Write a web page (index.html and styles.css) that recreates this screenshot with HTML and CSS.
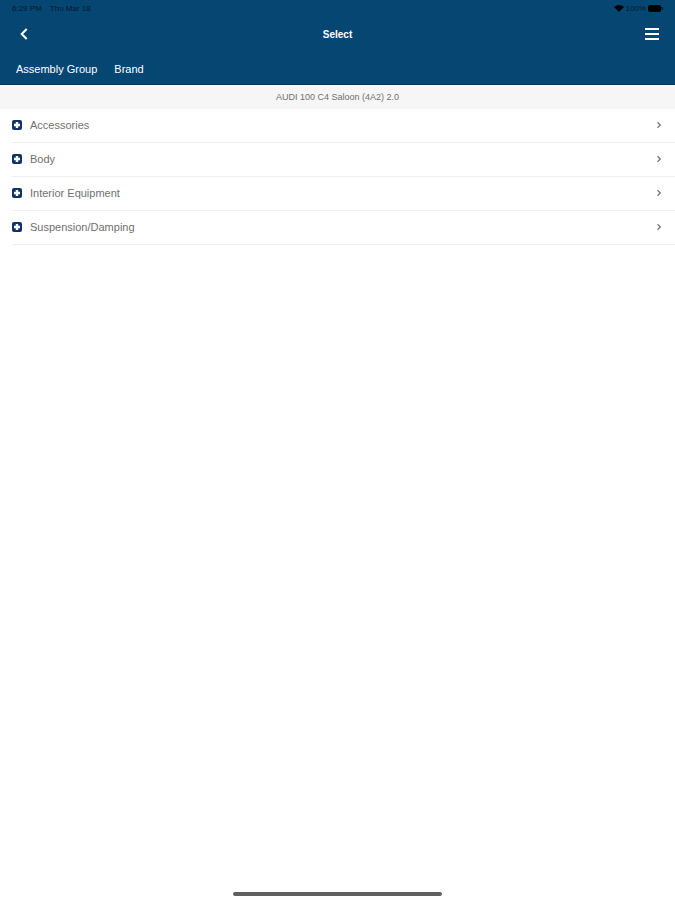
FILE: index.html
```html
<!DOCTYPE html>
<html lang="en">
<head>
<meta charset="utf-8">
<meta name="viewport" content="width=device-width, initial-scale=1">
<title>Select</title>
<link rel="stylesheet" href="styles.css">
</head>
<body>
<svg class="sprite" aria-hidden="true">
  <symbol id="plus" viewBox="0 0 10 10">
    <rect width="10" height="10" rx="2" fill="#12326b"/>
    <path d="M5 2v6M2 5h6" stroke="#fff" stroke-width="2.4"/>
  </symbol>
  <symbol id="chevron" viewBox="0 0 6 8">
    <path d="M1.5 1.2 4.3 4 1.5 6.8" fill="none" stroke="#777" stroke-width="1.3"/>
  </symbol>
</svg>
<header class="header">
  <div class="status">
    <span>6:29 PM</span>
    <span>Thu Mar 18</span>
    <span class="status-right">
      <svg width="10" height="7" viewBox="0 0 10 7" aria-hidden="true"><path d="M0 2Q5-2 10 2L5 7Z"/></svg>
      <span>100%</span>
      <svg width="15" height="7" viewBox="0 0 15 7" aria-hidden="true"><rect width="13" height="7" rx="2"/><rect x="13.5" y="2" width="1" height="3"/></svg>
    </span>
  </div>
  <div class="bar">
    <button class="icon-button" aria-label="Back">
      <svg width="8" height="12" viewBox="0 0 8 12"><path d="M6.7 1 1.7 6l5 5" fill="none" stroke="#fff" stroke-width="2"/></svg>
    </button>
    <h1 class="title">Select</h1>
    <button class="icon-button icon-button-end" aria-label="Menu">
      <svg width="14" height="12" viewBox="0 0 14 12"><path d="M0 1h14M0 6h14M0 11h14" stroke="#fff" stroke-width="2"/></svg>
    </button>
  </div>
  <nav class="tabs">
    <a href="#assembly">Assembly Group</a>
    <a href="#brand">Brand</a>
  </nav>
</header>
<main class="main">
  <h2 class="vehicle">AUDI 100 C4 Saloon (4A2) 2.0</h2>
  <ul class="list">
    <li><a class="row" href="#accessories"><svg class="plus"><use href="#plus"/></svg><span class="label">Accessories</span><svg class="chevron"><use href="#chevron"/></svg></a></li>
    <li><a class="row" href="#body"><svg class="plus"><use href="#plus"/></svg><span class="label">Body</span><svg class="chevron"><use href="#chevron"/></svg></a></li>
    <li><a class="row" href="#interior"><svg class="plus"><use href="#plus"/></svg><span class="label">Interior Equipment</span><svg class="chevron"><use href="#chevron"/></svg></a></li>
    <li><a class="row" href="#suspension"><svg class="plus"><use href="#plus"/></svg><span class="label">Suspension/Damping</span><svg class="chevron"><use href="#chevron"/></svg></a></li>
  </ul>
</main>
<div class="home"></div>
</body>
</html>
```
FILE: styles.css
```css
* {
  box-sizing: border-box;
}

body {
  margin: 0;
  min-height: 100vh;
  display: flex;
  flex-direction: column;
  background: #fff;
  color: #707070;
  font-family: "Liberation Sans", Arial, sans-serif;
  font-size: 11px;
}

svg {
  display: block;
  flex: none;
}

.sprite {
  position: absolute;
  width: 0;
  height: 0;
}

.header {
  background: #064672;
  color: #fff;
  border-bottom: 1px solid #08345c;
}

.status {
  display: flex;
  align-items: center;
  gap: 8px;
  height: 16px;
  padding: 0 12px;
  color: #04192c;
  font-size: 8px;
}

.status-right {
  display: flex;
  align-items: center;
  gap: 2px;
  margin-left: auto;
}

.bar {
  display: grid;
  grid-template-columns: 1fr auto 1fr;
  align-items: center;
  height: 36px;
  padding: 0 16px;
}

.icon-button {
  padding: 4px;
  border: 0;
  background: none;
  justify-self: start;
}

.icon-button-end {
  justify-self: end;
  padding: 4px 0;
}

.title {
  margin: 0;
  font-size: 10px;
}

.tabs {
  display: flex;
  align-items: center;
  gap: 17px;
  height: 32px;
  padding: 2px 16px 0;
}

.tabs a {
  color: inherit;
  text-decoration: none;
}

.main {
  flex: 1;
}

.vehicle {
  margin: 0;
  background: #f6f6f6;
  font-size: 9px;
  font-weight: normal;
  line-height: 24px;
  text-align: center;
}

.list {
  margin: 0;
  padding: 0 0 0 12px;
  list-style: none;
}

.row {
  display: flex;
  align-items: center;
  gap: 8px;
  height: 34px;
  padding: 0 13px 1px 0;
  border-bottom: 1px solid #eee;
  color: inherit;
  text-decoration: none;
}

.label {
  flex: 1;
}

.plus {
  width: 10px;
  height: 10px;
}

.chevron {
  width: 6px;
  height: 8px;
}

.home {
  width: 31%;
  height: 4px;
  margin: 0 auto 4px;
  border-radius: 2px;
  background: #606060;
}
```
